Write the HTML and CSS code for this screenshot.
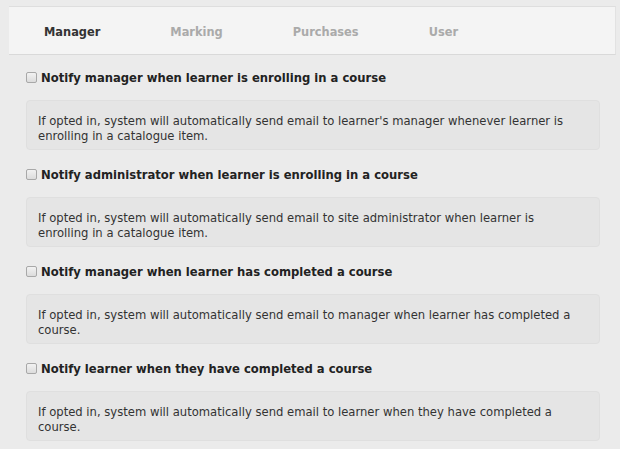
FILE: index.html
```html
<!DOCTYPE html>
<html>
<head>
<meta charset="utf-8">
<link rel="stylesheet" href="styles.css">
</head>
<body>
<div class="page">
  <nav class="tabs">
    <span class="tab active">Manager</span>
    <span class="tab">Marking</span>
    <span class="tab">Purchases</span>
    <span class="tab">User</span>
  </nav>
  <div class="settings">
    <div class="item">
      <label class="opt"><input type="checkbox" class="cb"><span>Notify manager when learner is enrolling in a course</span></label>
      <div class="desc">If opted in, system will automatically send email to learner's manager whenever learner is enrolling in a catalogue item.</div>
    </div>
    <div class="item">
      <label class="opt"><input type="checkbox" class="cb"><span>Notify administrator when learner is enrolling in a course</span></label>
      <div class="desc">If opted in, system will automatically send email to site administrator when learner is enrolling in a catalogue item.</div>
    </div>
    <div class="item">
      <label class="opt"><input type="checkbox" class="cb"><span>Notify manager when learner has completed a course</span></label>
      <div class="desc">If opted in, system will automatically send email to manager when learner has completed a course.</div>
    </div>
    <div class="item">
      <label class="opt"><input type="checkbox" class="cb"><span>Notify learner when they have completed a course</span></label>
      <div class="desc">If opted in, system will automatically send email to learner when they have completed a course.</div>
    </div>
  </div>
</div>
</body>
</html>
```

FILE: styles.css
```css
html, body {
  margin: 0;
  padding: 0;
  background: #ebebeb;
}
body {
  font-family: "DejaVu Sans", Verdana, sans-serif;
  color: #333;
  width: 620px;
  height: 449px;
  overflow: hidden;
}
.page {
  padding: 6px 4px 0 9px;
}
.tabs {
  display: flex;
  align-items: center;
  box-sizing: border-box;
  height: 49px;
  padding-top: 2px;
  background: #f4f4f4;
  border-top: 1px solid #dedede;
  border-bottom: 1px solid #d9d9d9;
  border-right: 1px solid #e2e2e2;
}
.tab {
  padding: 0 35px;
  font-size: 11.4px;
  font-weight: bold;
  color: #aaa;
}
.tab.active {
  color: #333;
}
.settings {
  padding: 15px 0 0 17px;
  width: 574px;
}
.item {
  margin-bottom: 17px;
}
.opt {
  display: flex;
  align-items: center;
  height: 16px;
  font-size: 11.6px;
  font-weight: bold;
  color: #222;
  margin-bottom: 14px;
}
.cb {
  appearance: none;
  -webkit-appearance: none;
  margin: 0 4px 1px 0;
  width: 11px;
  height: 11px;
  border: 1px solid #a8a8a8;
  border-radius: 2px;
  background: linear-gradient(#f2f2f2, #dcdcdc);
  box-sizing: border-box;
}
.desc {
  box-sizing: border-box;
  height: 50px;
  padding: 13px 11px 0 11px;
  background: #e5e5e5;
  border: 1px solid #dfdfdf;
  border-radius: 4px;
  font-size: 11.6px;
  line-height: 15px;
  color: #333;
}
```
